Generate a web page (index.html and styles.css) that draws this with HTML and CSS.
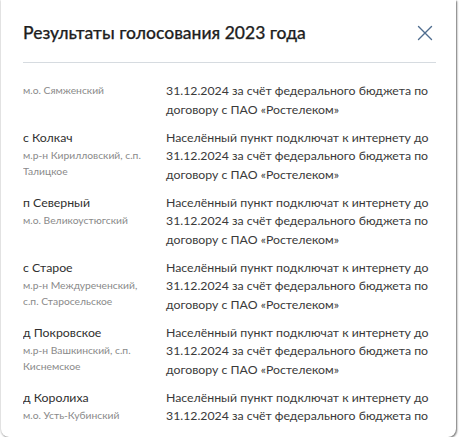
FILE: index.html
```html
<!DOCTYPE html>
<html lang="ru">
<head>
<meta charset="utf-8">
<title>Результаты голосования 2023 года</title>
<link rel="stylesheet" href="styles.css">
</head>
<body>
<div class="modal">
  <div class="header">
    <h1 class="title">Результаты голосования 2023 года</h1>
    <button class="close" aria-label="Закрыть">
      <svg width="16" height="16" viewBox="0 0 16 16"><path d="M1.5 1.5L14.5 14.5M14.5 1.5L1.5 14.5" stroke="#4f6d8f" stroke-width="1.4" fill="none" stroke-linecap="round"/></svg>
    </button>
  </div>
  <div class="divider"></div>
  <div class="list-wrap">
    <div class="list">
      <div class="row">
        <div class="place"><div class="name">с Сямжа</div><div class="sub">м.о. Сямженский</div></div>
        <div class="text">Населённый пункт подключат к интернету до 31.12.2024 за счёт федерального бюджета по договору с ПАО «Ростелеком»</div>
      </div>
      <div class="row">
        <div class="place"><div class="name">с Колкач</div><div class="sub">м.р-н Кирилловский, с.п. Талицкое</div></div>
        <div class="text">Населённый пункт подключат к интернету до 31.12.2024 за счёт федерального бюджета по договору с ПАО «Ростелеком»</div>
      </div>
      <div class="row">
        <div class="place"><div class="name">п Северный</div><div class="sub">м.о. Великоустюгский</div></div>
        <div class="text">Населённый пункт подключат к интернету до 31.12.2024 за счёт федерального бюджета по договору с ПАО «Ростелеком»</div>
      </div>
      <div class="row">
        <div class="place"><div class="name">с Старое</div><div class="sub">м.р-н Междуреченский, с.п. Старосельское</div></div>
        <div class="text">Населённый пункт подключат к интернету до 31.12.2024 за счёт федерального бюджета по договору с ПАО «Ростелеком»</div>
      </div>
      <div class="row">
        <div class="place"><div class="name">д Покровское</div><div class="sub">м.р-н Вашкинский, с.п. Киснемское</div></div>
        <div class="text">Населённый пункт подключат к интернету до 31.12.2024 за счёт федерального бюджета по договору с ПАО «Ростелеком»</div>
      </div>
      <div class="row">
        <div class="place"><div class="name">д Королиха</div><div class="sub">м.о. Усть-Кубинский</div></div>
        <div class="text">Населённый пункт подключат к интернету до 31.12.2024 за счёт федерального бюджета по договору с ПАО «Ростелеком»</div>
      </div>
    </div>
  </div>
</div>
</body>
</html>
```

FILE: styles.css
```css
* { box-sizing: border-box; }
html, body { margin: 0; padding: 0; background: #ffffff; }
body {
  font-family: Lato, "Noto Sans", sans-serif;
  color: #333;
  padding: 0 0 0 1px;
}
.modal {
  width: 455px;
  height: 437px;
  background: #fff;
  border-radius: 0 0 8px 8px;
  box-shadow: 1px 1px 2px rgba(0,0,0,0.55), -1px 0 2px rgba(0,0,0,0.12);
  padding: 0 20px 14px 22px;
  display: flex;
  flex-direction: column;
}
.header {
  display: flex;
  justify-content: space-between;
  align-items: center;
  padding-top: 21px;
}
.title {
  margin: 0;
  font-size: 17.5px;
  line-height: 24px;
  font-weight: 500;
  color: #1f1f1f;
  -webkit-text-stroke: 0.25px #1f1f1f;
}
.close {
  border: 0;
  background: none;
  padding: 0;
  width: 16px;
  height: 16px;
  margin-right: 3px;
  display: flex;
}
.divider {
  margin-top: 17px;
  height: 1px;
  background: #d6dbe0;
}
.list-wrap {
  flex: 1;
  overflow: hidden;
  margin-top: 20px;
}
.list {
  margin-top: -19px;
}
.row {
  display: grid;
  grid-template-columns: 121px 1fr;
  column-gap: 22px;
  margin-bottom: 10.1px;
}
.name {
  font-size: 12.3px;
  line-height: 18.3px;
  color: #2f2f2f;
}
.sub {
  font-size: 10.3px;
  line-height: 16px;
  color: #8a8a8a;
}
.text {
  font-size: 12.3px;
  line-height: 18.3px;
  color: #3a3a3a;
}
```
